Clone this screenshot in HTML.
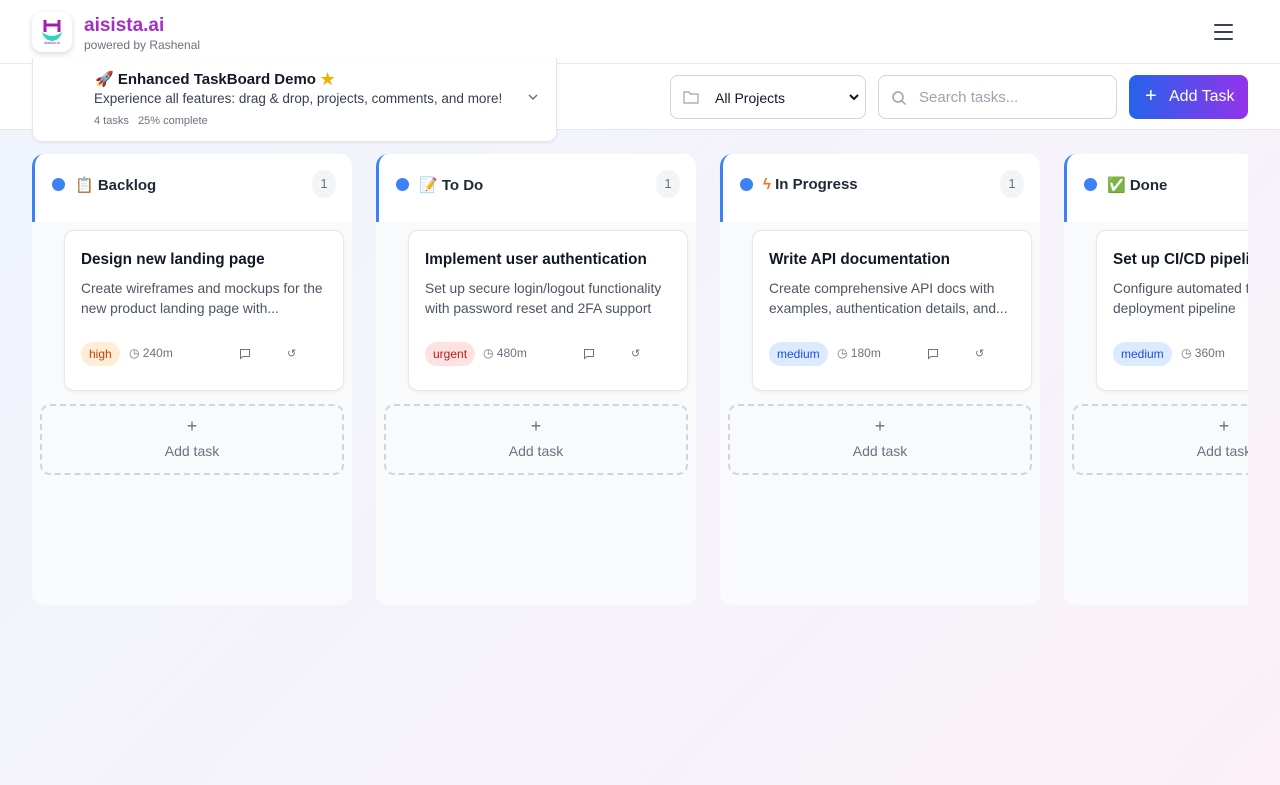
<!DOCTYPE html>
<html><head><meta charset="utf-8"><style>
*{box-sizing:border-box;margin:0;padding:0}
body{width:1280px;height:785px;overflow:hidden;font-family:"Liberation Sans","Noto Sans CJK SC",sans-serif;background:linear-gradient(135deg,#eff4fd 0%,#f6f3fb 60%,#fbf1f7 100%);position:relative;color:#111827}
.hdr{position:absolute;left:0;top:0;width:1280px;height:64px;background:#fff;border-bottom:1px solid #ede4fb}
.logo{position:absolute;left:32px;top:12px;width:40px;height:40px;border-radius:10px;background:#fff;box-shadow:0 2px 6px rgba(0,0,0,.15)}
.brand{position:absolute;left:84px;top:15px;font-size:19px;font-weight:bold;color:#a42fc6}
.pw{position:absolute;left:84px;top:38px;font-size:12px;color:#6b7280}
.menu{position:absolute;left:1214px;top:24px;width:19px}
.menu i{display:block;height:2px;background:#374151;margin-bottom:5px;border-radius:1px}
.tb{position:absolute;left:0;top:64px;width:1280px;height:66px;background:#fff;border-bottom:1px solid #e5e7eb}
.proj{position:absolute;left:32px;top:58px;width:525px;height:84px;background:#fff;border:1px solid #e5e7eb;border-top:none;border-radius:0 0 10px 10px;box-shadow:0 1px 3px rgba(0,0,0,.06)}
.sel{position:absolute;left:670px;top:75px;width:196px;height:44px;border:1px solid #d1d5db;border-radius:8px;background:#fff;font-size:14px;color:#111827}
.srch{position:absolute;left:878px;top:75px;width:239px;height:44px;border:1px solid #d1d5db;border-radius:8px;background:#fff;font-size:15px;color:#9ca3af}
.add{position:absolute;left:1129px;top:75px;width:119px;height:44px;border-radius:8px;background:linear-gradient(90deg,#2563eb,#9333ea);color:#fff;font-size:16px}
.col{position:absolute;top:154px;width:320px;height:451px;background:#f8fafc;border-radius:12px;overflow:hidden}
.ch{height:68px;background:#fff;border-left:3px solid #3b82f6;border-radius:12px 0 0 0;position:relative}
.dot{position:absolute;left:17px;top:24px;width:13px;height:13px;border-radius:50%;background:#3b82f6}
.ct{position:absolute;left:40px;top:22px;font-size:15px;font-weight:bold;color:#1f2937}
.cnt{position:absolute;left:277px;top:16px;width:24px;height:28px;border-radius:12px;background:#f3f4f6;color:#6b7280;font-size:13px;text-align:center;line-height:28px}
.card{position:absolute;left:32px;top:76px;width:280px;height:161px;background:#fff;border:1px solid #e5e7eb;border-radius:10px;box-shadow:0 1px 3px rgba(0,0,0,.05)}
.card h3{position:absolute;left:16px;top:20px;font-size:15.3px;font-weight:bold;color:#111827;white-space:nowrap}
.card p{position:absolute;left:16px;top:48px;width:252px;font-size:13.8px;line-height:20px;color:#4b5563}
.tag{position:absolute;left:16px;top:111px;height:24px;padding:0 8px;border-radius:12px;font-size:12px;line-height:24px}
.tm{position:absolute;top:115px;font-size:12px;color:#6b7280}
.ic{position:absolute;top:116px}
.at{position:absolute;left:8px;top:250px;width:304px;height:71px;border:2px dashed #d1d5db;border-radius:10px;text-align:center;color:#6b7280;font-size:14px}
</style></head><body>
<div class="hdr">
<div class="logo"><svg width="40" height="40" viewBox="0 0 40 40"><path d="M13 8v12M27 8v12M13 13h14" stroke="#a21caf" stroke-width="3" fill="none"/><path d="M10 20q10 8 20 0q-2 8-10 9q-8-1-10-9z" fill="#2dd4bf"/><text x="20" y="32" font-size="4" text-anchor="middle" fill="#a21caf" font-family="Liberation Sans">aisista.ai</text></svg></div>
<div class="brand">aisista.ai</div><div class="pw">powered by Rashenal</div>
<div class="menu"><i></i><i></i><i></i></div>
</div>
<div class="tb"></div>
<div class="proj">
<div style="position:absolute;left:62px;top:10px;font-size:15px;font-weight:bold;color:#111827">🚀 Enhanced TaskBoard Demo <span style="color:#eab308">★</span></div>
<div style="position:absolute;left:61px;top:33px;font-size:13.5px;color:#374151">Experience all features: drag &amp; drop, projects, comments, and more!</div>
<div style="position:absolute;left:61px;top:57px;font-size:11px;color:#6b7280">4 tasks&nbsp;&nbsp;&nbsp;25% complete</div>
<svg style="position:absolute;left:494px;top:33px" width="12" height="12" viewBox="0 0 12 12"><path d="M2 4l4 4 4-4" stroke="#6b7280" stroke-width="1.5" fill="none"/></svg>
</div>
<div class="sel"><svg style="position:absolute;left:12px;top:14px" width="16" height="14" viewBox="0 0 16 14"><path d="M1 2h5l1.5 2H15v9H1z" stroke="#9ca3af" stroke-width="1.2" fill="none"/></svg><span style="position:absolute;left:44px;top:14px">All Projects</span><svg style="position:absolute;left:178px;top:17px" width="10" height="8" viewBox="0 0 10 8"><path d="M1 2l4 4 4-4" stroke="#111" stroke-width="2" fill="none"/></svg></div>
<div class="srch"><svg style="position:absolute;left:12px;top:14px" width="16" height="16" viewBox="0 0 16 16"><circle cx="7" cy="7" r="5" stroke="#9ca3af" stroke-width="1.5" fill="none"/><path d="M11 11l3.5 3.5" stroke="#9ca3af" stroke-width="1.5"/></svg><span style="position:absolute;left:40px;top:13px">Search tasks...</span></div>
<div class="add"><span style="position:absolute;left:16px;top:11px;font-size:20px;line-height:20px">+</span><span style="position:absolute;left:40px;top:13px">Add Task</span></div>

<div class="col" style="left:32px"><div class="ch"><div class="dot"></div><div class="ct">📋 Backlog</div><div class="cnt">1</div></div>
<div class="card"><h3>Design new landing page</h3><p>Create wireframes and mockups for the new product landing page with...</p><span class="tag" style="background:#ffedd5;color:#c2410c">high</span><span class="tm" style="left:64px">◷ 240m</span><span class="ic" style="left:174px"><svg width="12" height="12" viewBox="0 0 12 12"><path d="M1.5 1.5h9v7H4l-2.5 2z" stroke="#6b7280" fill="none"/></svg></span><span class="ic" style="left:222px;font-size:11px;color:#6b7280">↺</span></div>
<div class="at"><div style="font-size:18px;margin-top:11px;line-height:18px">+</div><div style="margin-top:8px">Add task</div></div></div>

<div class="col" style="left:376px"><div class="ch"><div class="dot"></div><div class="ct">📝 To Do</div><div class="cnt">1</div></div>
<div class="card"><h3>Implement user authentication</h3><p>Set up secure login/logout functionality with password reset and 2FA support</p><span class="tag" style="background:#fee2e2;color:#b91c1c">urgent</span><span class="tm" style="left:74px">◷ 480m</span><span class="ic" style="left:174px"><svg width="12" height="12" viewBox="0 0 12 12"><path d="M1.5 1.5h9v7H4l-2.5 2z" stroke="#6b7280" fill="none"/></svg></span><span class="ic" style="left:222px;font-size:11px;color:#6b7280">↺</span></div>
<div class="at"><div style="font-size:18px;margin-top:11px;line-height:18px">+</div><div style="margin-top:8px">Add task</div></div></div>

<div class="col" style="left:720px"><div class="ch"><div class="dot"></div><div class="ct"><span style="color:#f97316">ϟ</span> In Progress</div><div class="cnt">1</div></div>
<div class="card"><h3>Write API documentation</h3><p>Create comprehensive API docs with examples, authentication details, and...</p><span class="tag" style="background:#dbeafe;color:#1d4ed8">medium</span><span class="tm" style="left:84px">◷ 180m</span><span class="ic" style="left:174px"><svg width="12" height="12" viewBox="0 0 12 12"><path d="M1.5 1.5h9v7H4l-2.5 2z" stroke="#6b7280" fill="none"/></svg></span><span class="ic" style="left:222px;font-size:11px;color:#6b7280">↺</span></div>
<div class="at"><div style="font-size:18px;margin-top:11px;line-height:18px">+</div><div style="margin-top:8px">Add task</div></div></div>

<div style="position:absolute;left:1064px;top:154px;width:184px;height:451px;overflow:hidden">
<div class="col" style="left:0;top:0"><div class="ch"><div class="dot"></div><div class="ct">✅ Done</div></div>
<div class="card"><h3>Set up CI/CD pipeline</h3><p>Configure automated testing and deployment pipeline</p><span class="tag" style="background:#dbeafe;color:#1d4ed8">medium</span><span class="tm" style="left:84px">◷ 360m</span></div>
<div class="at"><div style="font-size:18px;margin-top:11px;line-height:18px">+</div><div style="margin-top:8px">Add task</div></div></div></div>
</body></html>
